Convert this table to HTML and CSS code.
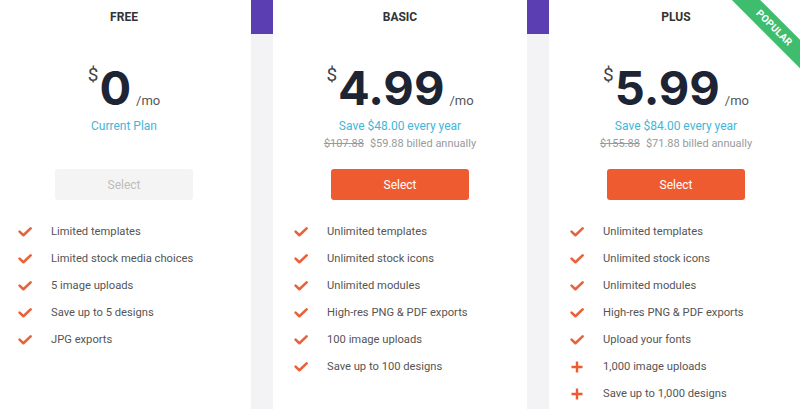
FILE: index.html
```html
<!DOCTYPE html>
<html lang="en">
<head>
<meta charset="utf-8">
<title>Pricing</title>
<link rel="stylesheet" href="styles.css">
</head>
<body>
<div class="plans">
  <section class="card">
    <h2 class="title">FREE</h2>
    <div class="price"><span class="cur">$</span><span class="amount">0</span><span class="per">/mo</span></div>
    <div class="info">
      <div class="save">Current Plan</div>
    </div>
    <button class="btn btn-disabled">Select</button>
    <ul class="features">
      <li><svg class="ico" viewBox="0 0 14 10"><path d="M1.6 4.6 L5.4 8.2 L12.6 1.4"/></svg>Limited templates</li>
      <li><svg class="ico" viewBox="0 0 14 10"><path d="M1.6 4.6 L5.4 8.2 L12.6 1.4"/></svg>Limited stock media choices</li>
      <li><svg class="ico" viewBox="0 0 14 10"><path d="M1.6 4.6 L5.4 8.2 L12.6 1.4"/></svg>5 image uploads</li>
      <li><svg class="ico" viewBox="0 0 14 10"><path d="M1.6 4.6 L5.4 8.2 L12.6 1.4"/></svg>Save up to 5 designs</li>
      <li><svg class="ico" viewBox="0 0 14 10"><path d="M1.6 4.6 L5.4 8.2 L12.6 1.4"/></svg>JPG exports</li>
    </ul>
  </section>

  <section class="card">
    <h2 class="title">BASIC</h2>
    <div class="price"><span class="cur">$</span><span class="amount">4.99</span><span class="per">/mo</span></div>
    <div class="info">
      <div class="save">Save $48.00 every year</div>
      <div class="billed"><s>$107.88</s>$59.88 billed annually</div>
    </div>
    <button class="btn">Select</button>
    <ul class="features">
      <li><svg class="ico" viewBox="0 0 14 10"><path d="M1.6 4.6 L5.4 8.2 L12.6 1.4"/></svg>Unlimited templates</li>
      <li><svg class="ico" viewBox="0 0 14 10"><path d="M1.6 4.6 L5.4 8.2 L12.6 1.4"/></svg>Unlimited stock icons</li>
      <li><svg class="ico" viewBox="0 0 14 10"><path d="M1.6 4.6 L5.4 8.2 L12.6 1.4"/></svg>Unlimited modules</li>
      <li><svg class="ico" viewBox="0 0 14 10"><path d="M1.6 4.6 L5.4 8.2 L12.6 1.4"/></svg>High-res PNG &amp; PDF exports</li>
      <li><svg class="ico" viewBox="0 0 14 10"><path d="M1.6 4.6 L5.4 8.2 L12.6 1.4"/></svg>100 image uploads</li>
      <li><svg class="ico" viewBox="0 0 14 10"><path d="M1.6 4.6 L5.4 8.2 L12.6 1.4"/></svg>Save up to 100 designs</li>
    </ul>
  </section>

  <section class="card">
    <div class="ribbon">POPULAR</div>
    <h2 class="title">PLUS</h2>
    <div class="price"><span class="cur">$</span><span class="amount">5.99</span><span class="per">/mo</span></div>
    <div class="info">
      <div class="save">Save $84.00 every year</div>
      <div class="billed"><s>$155.88</s>$71.88 billed annually</div>
    </div>
    <button class="btn">Select</button>
    <ul class="features">
      <li><svg class="ico" viewBox="0 0 14 10"><path d="M1.6 4.6 L5.4 8.2 L12.6 1.4"/></svg>Unlimited templates</li>
      <li><svg class="ico" viewBox="0 0 14 10"><path d="M1.6 4.6 L5.4 8.2 L12.6 1.4"/></svg>Unlimited stock icons</li>
      <li><svg class="ico" viewBox="0 0 14 10"><path d="M1.6 4.6 L5.4 8.2 L12.6 1.4"/></svg>Unlimited modules</li>
      <li><svg class="ico" viewBox="0 0 14 10"><path d="M1.6 4.6 L5.4 8.2 L12.6 1.4"/></svg>High-res PNG &amp; PDF exports</li>
      <li><svg class="ico" viewBox="0 0 14 10"><path d="M1.6 4.6 L5.4 8.2 L12.6 1.4"/></svg>Upload your fonts</li>
      <li><svg class="ico plus" viewBox="0 0 14 12"><path d="M7 0.5 V11.5 M1.5 6 H12.5"/></svg>1,000 image uploads</li>
      <li><svg class="ico plus" viewBox="0 0 14 12"><path d="M7 0.5 V11.5 M1.5 6 H12.5"/></svg>Save up to 1,000 designs</li>
    </ul>
  </section>
</div>
</body>
</html>
```

FILE: styles.css
```css
* { box-sizing: border-box; }

html, body {
  margin: 0;
  padding: 0;
}

body {
  width: 800px;
  height: 409px;
  overflow: hidden;
  background: linear-gradient(#5b3fb2 0, #5b3fb2 34px, #f3f3f6 34px, #f3f3f6 100%);
  font-family: Roboto, "Liberation Sans", Arial, sans-serif;
  color: #555;
}

.plans {
  display: grid;
  grid-template-columns: 254px 254px 254px;
  column-gap: 22px;
  margin-left: -3px;
  width: 806px;
}

.card {
  position: relative;
  overflow: hidden;
  background: #fff;
  height: 409px;
  padding-top: 9px;
  display: flex;
  flex-direction: column;
  align-items: center;
}

.title {
  margin: 0;
  font-size: 12px;
  line-height: 16px;
  font-weight: 700;
  color: #333;
}

.price {
  margin-top: 39px;
  display: flex;
  align-items: baseline;
  color: #1d2433;
}

.cur {
  align-self: flex-start;
  font-size: 19px;
  line-height: 20px;
  color: #444;
  margin-right: 1px;
  padding-top: 1px;
}

.amount {
  font-family: Inter, Roboto, sans-serif;
  font-weight: 700;
  font-size: 47px;
  line-height: 48px;
}

.per {
  font-size: 13px;
  color: #555;
  margin-left: 5px;
}

.info {
  margin-top: 6px;
  height: 34px;
  text-align: center;
}

.save {
  font-size: 12px;
  line-height: 17px;
  color: #42b6d8;
}

.billed {
  font-size: 11px;
  line-height: 17px;
  color: #9a9a9a;
}

.billed s {
  margin-right: 6px;
}

.btn {
  margin-top: 17px;
  width: 138px;
  height: 31px;
  border: none;
  border-radius: 3px;
  background: #ef5b30;
  color: #fff;
  font-family: Roboto, "Liberation Sans", sans-serif;
  font-size: 12px;
  padding: 0;
}

.btn-disabled {
  background: #f4f4f4;
  color: #bdbdbd;
}

.features {
  list-style: none;
  margin: 18px 0 0;
  padding: 0 0 0 21px;
  align-self: stretch;
}

.features li {
  display: flex;
  align-items: center;
  height: 27px;
  font-size: 11.2px;
  color: #555;
}

.ico {
  width: 14px;
  height: 10px;
  margin-right: 19px;
  flex: none;
  fill: none;
  stroke: #e8623c;
  stroke-width: 2.6;
  stroke-linecap: round;
  stroke-linejoin: round;
}

.ico.plus {
  height: 12px;
  stroke: #ef5b30;
  stroke-width: 2.4;
  stroke-linecap: butt;
}

.ribbon {
  position: absolute;
  left: 165px;
  top: 18px;
  width: 120px;
  height: 20px;
  line-height: 20px;
  transform: rotate(45deg);
  background: #3ebd6e;
  color: #fff;
  font-size: 10px;
  font-weight: 700;
  text-align: center;
  letter-spacing: 0.2px;
}
```
